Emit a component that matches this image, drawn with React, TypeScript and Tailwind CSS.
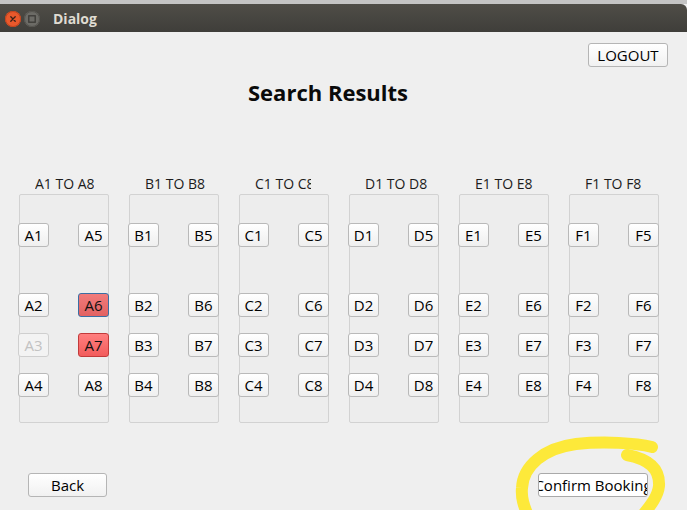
import React from "react";

type SeatState = "normal" | "disabled" | "selected" | "booked";

const seatState = (id: string): SeatState => {
  if (id === "A3") return "disabled";
  if (id === "A6") return "selected";
  if (id === "A7") return "booked";
  return "normal";
};

const labelClip: Record<string, string> = {
  A: "w-[59px]",
  B: "w-[70px]",
  C: "w-[56px]",
  D: "w-[70px]",
  E: "w-[70px]",
  F: "w-[70px]",
};

function Seat({ id }: { id: string }) {
  const s = seatState(id);
  const cls =
    s === "disabled"
      ? "bg-[#f3f3f3] border-[#cfcfcf] text-[#c2c2c2]"
      : s === "selected"
      ? "bg-linear-to-b from-[#f17b7b] to-[#e26262] border-[#3b6ea3] text-[#111]"
      : s === "booked"
      ? "bg-linear-to-b from-[#ff7e7e] to-[#f25c5c] border-[#c23a3a] text-[#111]"
      : "bg-linear-to-b from-[#ffffff] to-[#efefef] border-[#b9b9b9] text-black";
  return (
    <div
      className={`w-[31px] h-[24px] border rounded-[3px] flex items-center justify-center text-[15px] leading-none ${cls}`}
    >
      {id}
    </div>
  );
}

function Column({ letter }: { letter: string }) {
  const rows = [
    [1, 5],
    [2, 6],
    [3, 7],
    [4, 8],
  ];
  return (
    <div className="w-[90px] flex flex-col">
      <div className="h-[20px] pl-[16px]">
        <div
          className={`${labelClip[letter]} overflow-hidden whitespace-nowrap text-[14px] leading-[20px] text-[#1c1c1c]`}
        >
          {letter}1 TO {letter}8
        </div>
      </div>
      <div className="h-[229px] border border-[#d2d2d2] rounded-[2px] bg-[#ededed] flex flex-col pt-[28px]">
        {rows.map((r, i) => (
          <div
            key={i}
            className={`flex justify-between -ml-[2px] -mr-[1px] ${
              i === 1 ? "mt-[46px]" : i > 1 ? "mt-[16px]" : ""
            }`}
          >
            <Seat id={`${letter}${r[0]}`} />
            <Seat id={`${letter}${r[1]}`} />
          </div>
        ))}
      </div>
    </div>
  );
}

function Btn({ children, w }: { children: React.ReactNode; w: string }) {
  return (
    <div
      className={`${w} h-[24px] border border-[#b5b5b5] rounded-[3px] bg-linear-to-b from-[#ffffff] to-[#f1f1f1] flex items-center justify-center overflow-hidden whitespace-nowrap text-[15px] leading-none text-black`}
    >
      {children}
    </div>
  );
}

export default function App() {
  const letters = ["A", "B", "C", "D", "E", "F"];
  return (
    <div
      className="w-[687px] h-[510px] bg-[#efefef] relative overflow-hidden flex flex-col"
      style={{ fontFamily: '"Open Sans", "Noto Sans", sans-serif' }}
    >
      {/* window top */}
      <div className="h-[4px] bg-[#c4c4c4] shrink-0" />
      <div className="h-[28px] shrink-0 bg-linear-to-b from-[#4f4d47] to-[#3f3e3a] rounded-tr-[6px] flex items-center pl-[5px] gap-[3px]">
        <svg width="16" height="16" viewBox="0 0 16 16" className="mt-[2px]">
          <circle cx="8" cy="8" r="8" fill="#e9592c" />
          <circle cx="8" cy="8" r="7.5" fill="none" stroke="#c0441e" strokeWidth="1" />
          <path d="M5.8 5.8 L10.2 10.2 M10.2 5.8 L5.8 10.2" stroke="#3a2118" strokeWidth="1.3" strokeLinecap="round" />
        </svg>
        <svg width="16" height="16" viewBox="0 0 16 16" className="mt-[2px]">
          <circle cx="8" cy="8" r="8" fill="#6c6b66" />
          <circle cx="8" cy="8" r="7.5" fill="none" stroke="#55544f" strokeWidth="1" />
          <rect x="4.8" y="4.8" width="6.4" height="6.4" fill="none" stroke="#3b3a36" strokeWidth="1.3" />
        </svg>
        <div className="ml-[10px] text-[14px] font-bold text-[#dfdbd2] mt-[1px]">Dialog</div>
      </div>

      {/* content */}
      <div className="flex justify-end pr-[19px] mt-[11px]">
        <Btn w="w-[80px]">LOGOUT</Btn>
      </div>

      <div className="pl-[248px] mt-[10px] h-[30px] text-[22px] leading-[30px] font-bold text-[#0a0a0a] whitespace-nowrap">
        Search Results
      </div>

      <div className="flex gap-[20px] pl-[19px] mt-[67px]">
        {letters.map((l) => (
          <Column key={l} letter={l} />
        ))}
      </div>

      <div className="flex justify-between pl-[28px] pr-[39px] mt-[50px]">
        <Btn w="w-[79px]">Back</Btn>
        <div className="w-[110px] h-[24px] border border-[#a9a9a9] rounded-[3px] bg-white flex items-center justify-center overflow-hidden whitespace-nowrap text-[15px] leading-none text-black">
          <span className="shrink-0">Confirm Booking</span>
        </div>
      </div>

      {/* yellow annotation */}
      <svg
        className="absolute left-0 top-0 pointer-events-none"
        width="687"
        height="510"
        viewBox="0 0 687 510"
      >
        <path
          d="M652 447 C636 443 604 441 576 444 C544 448 523 466 522 488 C521 498 524 506 528 516"
          fill="none"
          stroke="#fde93a"
          strokeWidth="12"
          strokeLinecap="round"
        />
        <path
          d="M627 455 C648 459 660 468 659 486 C658 496 651 505 642 516"
          fill="none"
          stroke="#fde93a"
          strokeWidth="12"
          strokeLinecap="round"
        />
      </svg>
    </div>
  );
}
